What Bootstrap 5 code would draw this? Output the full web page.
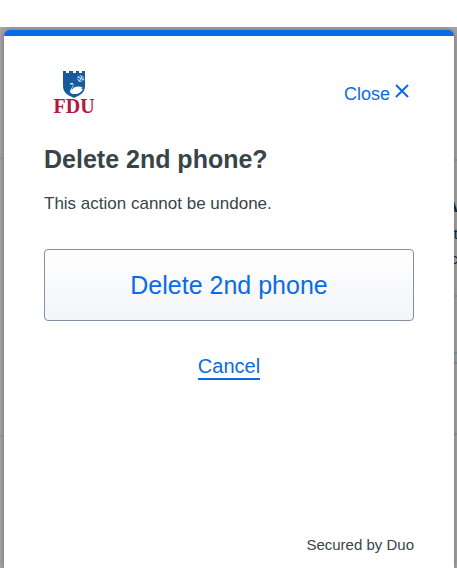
<!DOCTYPE html>
<html lang="en">
<head>
<meta charset="utf-8">
<meta name="viewport" content="width=device-width, initial-scale=1">
<title>Delete 2nd phone?</title>
<link href="https://cdn.jsdelivr.net/npm/bootstrap@5.3.0/dist/css/bootstrap.min.css" rel="stylesheet">
<style>
  body { font-family: "Liberation Sans", Arial, sans-serif; color: #394449; }
  .backdrop { background: #a6a6a6; margin-top: 27px; padding: 3px 3px 0 4px; }
  .dialog-panel { border-top: 6px solid #0b6be6; border-radius: 6px 6px 0 0; box-shadow: 0 0 6px rgba(0,0,0,.35); padding: 32px 40px 13px; z-index: 1; }
  .duo-link { color: #0b6be6; }
  .close-btn { font-size: 18px; line-height: 24px; margin-top: 14px; margin-right: 5px; gap: 5px; }
  .close-btn svg { margin-top: 2px; }
  .dialog-title { font-size: 25px; line-height: 32px; margin-top: 27px; }
  .dialog-text { font-size: 17px; line-height: 24px; margin-top: 17px; }
  .delete-btn { font-size: 25px; line-height: 36px; padding: 17px 16px; margin-top: 33px; border: 1px solid #8592a3; border-radius: 4px; background: linear-gradient(#fff, #f3f4f7); }
  .delete-btn:hover { color: #0b6be6; border-color: #0b6be6; }
  .cancel-btn { font-size: 20px; line-height: 24px; margin-top: 33px; border-bottom: 2px solid #0b6be6; border-radius: 0; }
  .secured { font-size: 15px; line-height: 20px; }
  /* Slivers of the page behind the dialog */
  .rule-line { position: absolute; left: 0; right: 0; border-top: 2px solid #929799; }
  .rule-line.left-half { right: 50%; border-top-width: 1px; }
  .rule-line.right-half { left: 50%; }
  .shaded-band { position: absolute; left: 50%; right: 0; top: 325px; height: 12px; background: #9ca5a8; border: solid #8b9498; border-width: 2px 0; }
  .behind-text { position: absolute; right: -1px; color: #22282b; font-size: 15px; line-height: 18px; }
  .behind-title { font-size: 18px; font-weight: 700; right: -1px; }
</style>
</head>
<body class="d-flex flex-column min-vh-100 overflow-hidden bg-white">
<div class="backdrop position-relative overflow-hidden flex-grow-1 d-flex flex-column">
  <div aria-hidden="true">
    <div class="rule-line left-half" style="top:131px"></div>
    <div class="rule-line left-half" style="top:408px"></div>
    <div class="rule-line right-half" style="top:132px"></div>
    <div class="rule-line right-half" style="top:268px"></div>
    <div class="shaded-band"></div>
    <div class="rule-line right-half" style="top:406px"></div>
    <span class="behind-text behind-title" style="top:170px">A</span>
    <span class="behind-text" style="top:198px">t</span>
    <span class="behind-text" style="top:223px">c</span>
  </div>
  <main class="dialog-panel position-relative bg-white flex-grow-1 d-flex flex-column" role="dialog" aria-labelledby="title">
    <header class="d-flex justify-content-between align-items-start">
      <svg width="60" height="48" viewBox="0 0 60 48" role="img" aria-label="FDU">
        <path fill="#175b9d" d="M19 3h3v2h3V3h4v2h3V3h3v2h3V3h3v15c0 6-4 9-11 12-7-3-11-6-11-12z"/>
        <g fill="none" stroke="#dcebf6" stroke-width="1">
          <circle cx="36.500" cy="10.500" r="2.800" stroke-dasharray="2 1"/>
          <path d="M34 9l6 3M38 8l-3 6"/>
        </g>
        <path fill="#fff" d="M26 16.500c0-2 3.500-2 3.500.5 0 2-2 3-2 5 3-4 6-4 11-3l-1.500 1.500 2 .5c-2 4-5 5-8 5-5 0-6-2-4-5 1-2 2-3 2-4 0-1-1-1-2-.5z"/>
        <text x="9.500" y="45" fill="#b3193f" font-family="Liberation Serif, Times New Roman, serif" font-weight="700" font-size="20">FDU</text>
      </svg>
      <button type="button" class="btn border-0 p-0 duo-link close-btn d-flex align-items-start"><span>Close</span><svg width="14" height="14" viewBox="0 0 14 14" aria-hidden="true"><path d="M1 1l12 12M13 1L1 13" stroke="currentColor" stroke-width="2" fill="none"/></svg></button>
    </header>
    <h1 class="dialog-title fw-bold mb-0" id="title">Delete 2nd phone?</h1>
    <p class="dialog-text mb-0">This action cannot be undone.</p>
    <button type="button" class="btn w-100 duo-link delete-btn">Delete 2nd phone</button>
    <div class="text-center">
      <button type="button" class="btn border-top-0 border-start-0 border-end-0 p-0 duo-link cancel-btn">Cancel</button>
    </div>
    <footer class="secured text-end mt-auto">Secured by Duo</footer>
  </main>
</div>
<script src="https://cdn.jsdelivr.net/npm/bootstrap@5.3.0/dist/js/bootstrap.bundle.min.js"></script>
</body>
</html>
